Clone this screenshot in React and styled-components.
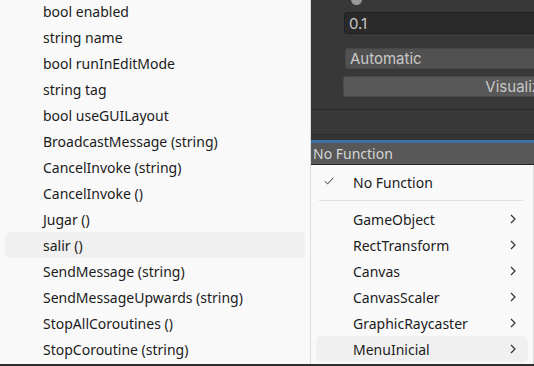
import { createGlobalStyle, styled } from "styled-components";

const GlobalStyle = createGlobalStyle`
  html, body {
    margin: 0;
    padding: 0;
    width: 534px;
    height: 366px;
    overflow: hidden;
    background: #2e2e2e;
  }
  * { box-sizing: border-box; }
`;

const Page = styled.div`
  display: flex;
  width: 534px;
  height: 366px;
  overflow: hidden;
  font-family: "Noto Sans", "Open Sans", sans-serif;
`;

const Menu = styled.div`
  flex: none;
  width: ${(p) => p.$width}px;
  height: ${(p) => p.$height}px;
  background: #f9f9f9;
  border-right: 1px solid #dcdcdc;
  padding-top: ${(p) => p.$padTop || 0}px;
  margin-top: ${(p) => p.$offset || 0}px;
  display: flex;
  flex-direction: column;
  overflow: hidden;
`;

const Row = styled.div`
  flex: none;
  height: 26px;
  margin: 0 5px;
  padding-left: ${(p) => p.$indent}px;
  padding-right: 12px;
  border-radius: 5px;
  display: flex;
  align-items: center;
  background: ${(p) => (p.$active ? "#f0f0f0" : "transparent")};
  color: #1b1b1b;
  font-size: 14px;
  white-space: nowrap;
`;

const Label = styled.span`
  flex: 1;
`;

const CheckSlot = styled.span`
  position: relative;
  width: 0;
  height: 26px;
  display: flex;
  align-items: center;
`;

const Separator = styled.div`
  flex: none;
  height: 1px;
  background: #e0e0e0;
  margin: 5px 10px 5px 8px;
`;

const RightColumn = styled.div`
  flex: 1;
  display: flex;
  flex-direction: column;
  min-width: 0;
`;

const Inspector = styled.div`
  flex: none;
  height: 140px;
  background: #383838;
  display: flex;
  flex-direction: column;
  padding-left: 33px;
  font-family: "Inter", "Noto Sans", sans-serif;
  font-size: 15px;
  color: #c8c8c8;
`;

const Knob = styled.div`
  flex: none;
  width: 11px;
  height: 11px;
  border-radius: 50%;
  background: #999999;
  margin: -6px 0 0 7px;
`;

const Field = styled.div`
  flex: none;
  height: ${(p) => p.$h}px;
  width: ${(p) => p.$w || 260}px;
  margin-top: ${(p) => p.$top}px;
  margin-left: ${(p) => p.$shift || 0}px;
  border-radius: 3px;
  border: 1px solid ${(p) => p.$border};
  background: ${(p) => p.$bg};
  display: flex;
  align-items: center;
  justify-content: ${(p) => (p.$center ? "center" : "flex-start")};
  padding-left: ${(p) => (p.$center ? 0 : 4)}px;
  white-space: nowrap;
  overflow: hidden;
`;

const Rule = styled.div`
  flex: none;
  height: 1px;
  background: ${(p) => p.$color};
  margin-top: ${(p) => p.$top}px;
  margin-left: -33px;
`;

const Gap = styled.div`
  flex: 1;
`;

const Band = styled.div`
  flex: none;
  height: 5px;
  background: #333333;
  margin-left: -33px;
`;

const FunctionBar = styled.div`
  flex: none;
  height: 21px;
  background: #585858;
  border-top: 3px solid #3a70a8;
  border-bottom: 1px solid #222;
  box-sizing: content-box;
  display: flex;
  align-items: center;
  padding-left: 2px;
  font-size: 14px;
  color: #d6d6d6;
  white-space: nowrap;
`;

const Check = () => (
  <svg width="10" height="8" viewBox="0 0 10 8" style={{ position: "absolute", left: -29, top: 8 }}>
    <path d="M0.8 4.2 L3.6 6.9 L9.2 0.9" fill="none" stroke="#333" strokeWidth="1" />
  </svg>
);

const Chevron = () => (
  <svg width="6" height="10" viewBox="0 0 6 10">
    <path d="M1 1 L5 5 L1 9" fill="none" stroke="#333" strokeWidth="1.2" />
  </svg>
);

const leftItems = [
  "bool enabled",
  "string name",
  "bool runInEditMode",
  "string tag",
  "bool useGUILayout",
  "BroadcastMessage (string)",
  "CancelInvoke (string)",
  "CancelInvoke ()",
  "Jugar ()",
  "salir ()",
  "SendMessage (string)",
  "SendMessageUpwards (string)",
  "StopAllCoroutines ()",
  "StopCoroutine (string)",
];

const components = ["GameObject", "RectTransform", "Canvas", "CanvasScaler", "GraphicRaycaster", "MenuInicial"];

export default function App() {
  return (
    <Page>
      <GlobalStyle />
      <Menu $width={311} $height={366} $offset={-2}>
        {leftItems.map((item) => (
          <Row key={item} $indent={38} $active={item === "salir ()"}>
            <Label>{item}</Label>
          </Row>
        ))}
      </Menu>
      <RightColumn>
        <Inspector>
          <Knob />
          <Field $bg="#2a2a2a" $border="#222222" $top={7} $h={22}>0.1</Field>
          <Field $bg="#515151" $border="#474747" $top={14} $h={21} $shift={1}>Automatic</Field>
          <Field $bg="#585858" $border="#4a4a4a" $top={7} $h={21} $shift={-1} $w={348} $center>
            Visualize
          </Field>
          <Rule $color="#2a2a2a" $top={12} />
          <Gap />
          <Rule $color="#2c2c2c" $top={0} />
          <Band />
        </Inspector>
        <FunctionBar>No Function</FunctionBar>
        <Menu $width={223} $height={199} $padTop={4}>
          <Row $indent={37}>
            <CheckSlot>
              <Check />
            </CheckSlot>
            <Label>No Function</Label>
          </Row>
          <Separator />
          {components.map((c) => (
            <Row key={c} $indent={37} $active={c === "MenuInicial"}>
              <Label>{c}</Label>
              <Chevron />
            </Row>
          ))}
        </Menu>
      </RightColumn>
    </Page>
  );
}
